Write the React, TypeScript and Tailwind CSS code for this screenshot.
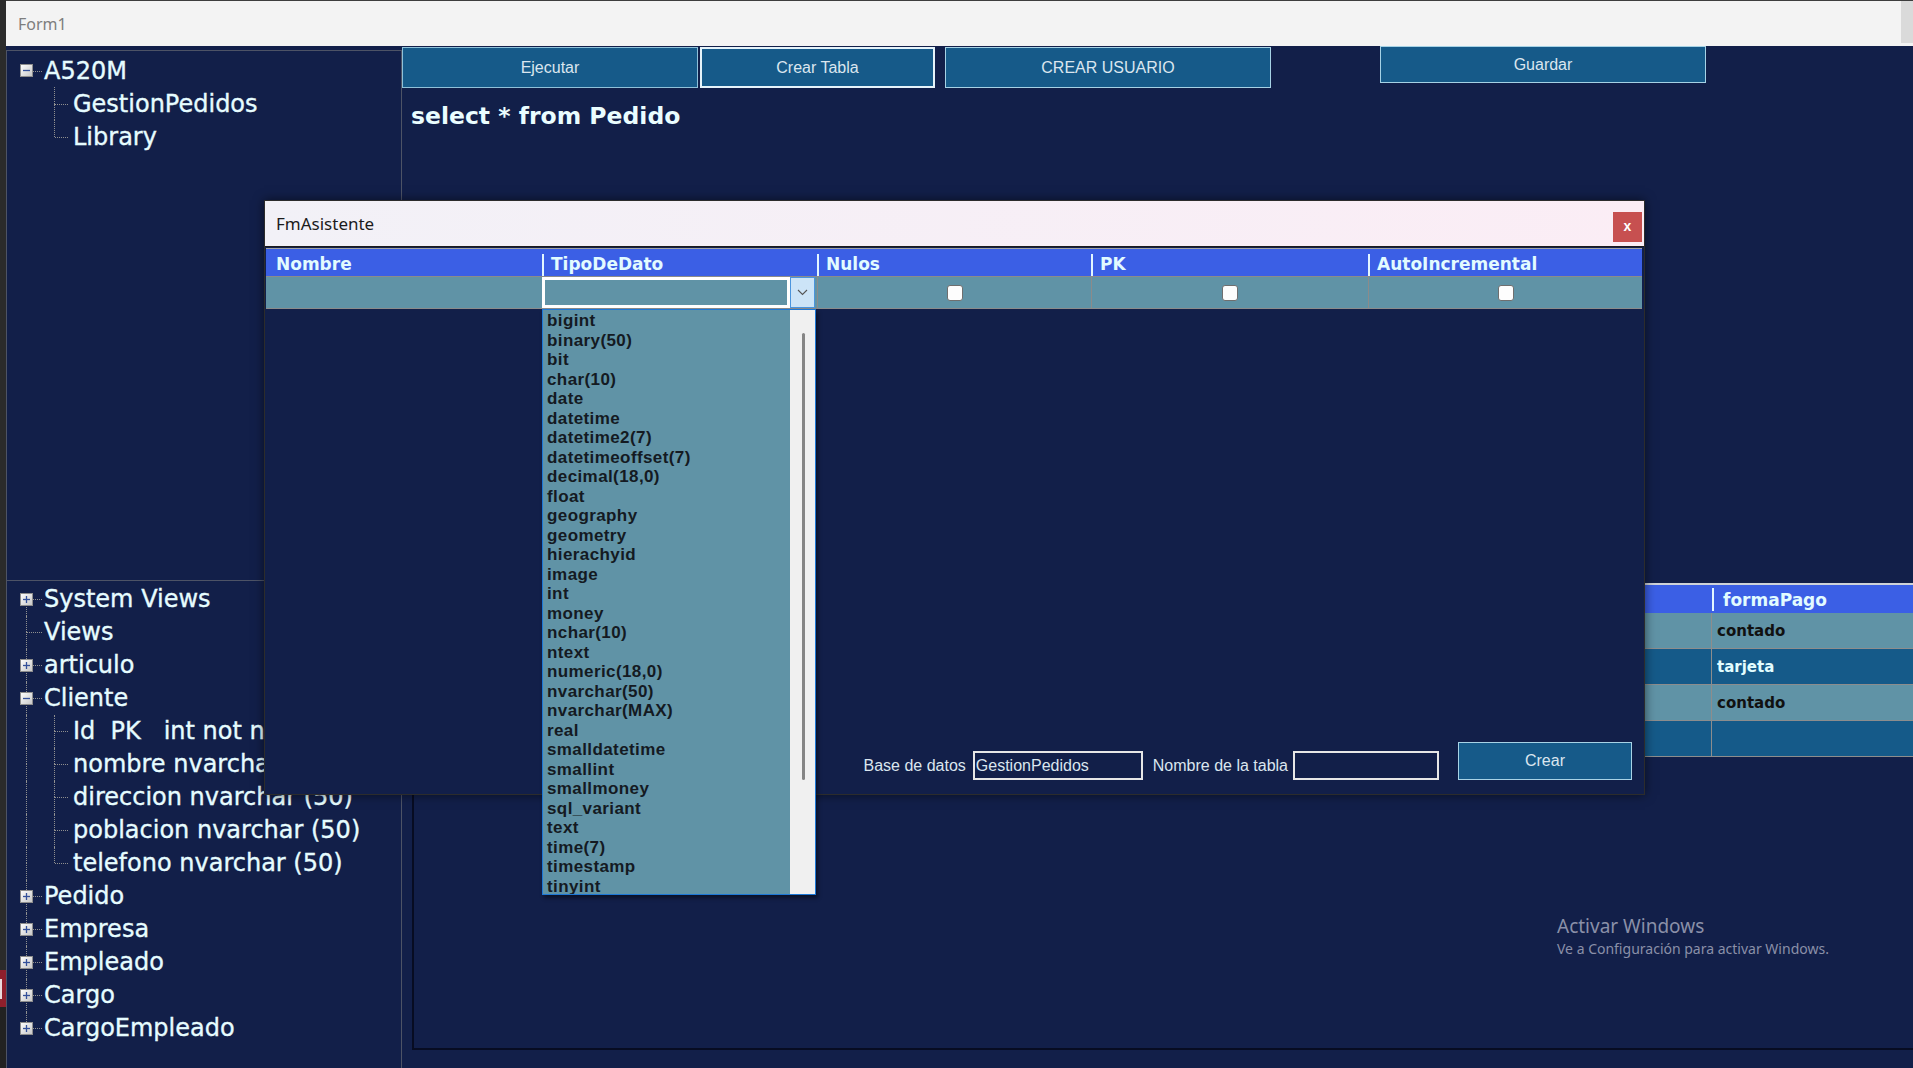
import React from "react";

const TYPES = [
  "bigint", "binary(50)", "bit", "char(10)", "date", "datetime", "datetime2(7)", "datetimeoffset(7)",
  "decimal(18,0)", "float", "geography", "geometry", "hierachyid", "image", "int", "money", "nchar(10)",
  "ntext", "numeric(18,0)", "nvarchar(50)", "nvarchar(MAX)", "real", "smalldatetime", "smallint",
  "smallmoney", "sql_variant", "text", "time(7)", "timestamp", "tinyint",
];

const COLUMNS = ["Nombre", "TipoDeDato", "Nulos", "PK", "AutoIncremental"];

const RESULTS = [
  { value: "contado", light: true },
  { value: "tarjeta", light: false },
  { value: "contado", light: true },
  { value: "", light: false },
];

interface RowProps {
  label: string
  depth: 0 | 1
  box?: "open" | "closed"
  up?: boolean
  down?: boolean
  childDown?: boolean
}

const Expander = ({ open }: { open: boolean }) => (
  <svg width="13" height="13" viewBox="0 0 13 13">
    <defs>
      <linearGradient id="exp-bg" x1="0" y1="0" x2="1" y2="1">
        <stop offset="0" stopColor="#ffffff" />
        <stop offset="1" stopColor="#c6c6c6" />
      </linearGradient>
    </defs>
    <rect x="0.5" y="0.5" width="12" height="12" fill="url(#exp-bg)" stroke="#8d8d8d" />
    <path d="M3 6.5h7" stroke="#34509a" strokeWidth="1.3" />
    {!open && <path d="M6.5 3v7" stroke="#34509a" strokeWidth="1.3" />}
  </svg>
);

const TreeRow = ({ label, depth, box, up, down, childDown }: RowProps) => (
  <div className="relative flex h-[33px] items-center whitespace-pre">
    {up && <span className="absolute left-[19px] top-0 h-1/2 border-l border-dotted border-[#8f8f8f]" />}
    {down && <span className="absolute left-[19px] top-1/2 h-1/2 border-l border-dotted border-[#8f8f8f]" />}
    {depth === 0 && <span className="absolute left-[20px] top-1/2 w-[15px] border-t border-dotted border-[#8f8f8f]" />}
    {depth === 1 && (
      <>
        <span className="absolute left-[47px] top-0 h-1/2 border-l border-dotted border-[#8f8f8f]" />
        {childDown && <span className="absolute left-[47px] top-1/2 h-1/2 border-l border-dotted border-[#8f8f8f]" />}
        <span className="absolute left-[48px] top-1/2 w-[13px] border-t border-dotted border-[#8f8f8f]" />
      </>
    )}
    {box && (
      <span className="absolute left-[13px] top-[10px] flex">
        <Expander open={box === "open"} />
      </span>
    )}
    <span className={depth === 0 ? "pl-[37px]" : "pl-[66px]"}>{label}</span>
  </div>
);

const WinButton = ({ label, className }: { label: string; className: string }) => (
  <div className={`flex items-center justify-center bg-[#165a89] text-[16px] text-[#dbe6ef] font-['Liberation_Sans',Arial,sans-serif] ${className}`}>
    {label}
  </div>
);

const Modal = () => (
  <div className="absolute left-[264px] top-[200px] flex h-[595px] w-[1381px] flex-col border border-[#2c2c2c] bg-[#121f49] shadow-[0_0_10px_rgba(0,0,0,0.55)]">
    <div className="flex h-[46px] shrink-0 items-center justify-between border-b border-[#1b1b1b] bg-gradient-to-r from-[#f2f1f7] to-[#fbedf5] pl-[11px] pr-[2px]">
      <span className="text-[17px] text-[#1b1b1b] font-['Noto_Sans',sans-serif]">FmAsistente</span>
      <div className="mt-[11px] flex h-[30px] w-[29px] items-center justify-center self-start bg-[#c75050] pb-[2px] text-[14px] font-bold text-white font-['Liberation_Sans',Arial,sans-serif]">
        x
      </div>
    </div>

    <div className="ml-[1px] mt-[1px] w-[1376px] border-t border-[#a3a3a3] font-['DejaVu_Sans',Verdana,sans-serif] font-bold">
      <div className="grid h-[27px] grid-cols-[276px_275px_274px_277px_274px] bg-[#3b5fe5] pt-[3px] text-[17px] text-[#e2fbff]">
        {COLUMNS.map((c, i) => (
          <div key={c} className="relative flex items-center pl-[9px]">
            {i > 0 && <span className="absolute left-0 top-[2px] bottom-[2px] w-[2px] bg-[#e2f6ff]" />}
            <span className={i === 0 ? "pl-[1px]" : ""}>{c}</span>
          </div>
        ))}
      </div>
      <div className="grid h-[33px] grid-cols-[276px_275px_274px_277px_274px] border-y border-[#8b8b8b] bg-[#6093a6]">
        <div />
        <div className="flex items-center pr-[2px]">
          <div className="flex h-[31px] w-full">
            <div className="flex-1 border-[3px] border-white bg-[#6093a6]" />
            <div className="flex w-[25px] items-center justify-center border border-[#4b95dd] bg-[#cce4f7]">
              <svg width="11" height="7" viewBox="0 0 11 7">
                <path d="M1 1l4.5 4.5L10 1" fill="none" stroke="#555" strokeWidth="1.1" />
              </svg>
            </div>
          </div>
        </div>
        {[0, 1, 2].map((i) => (
          <div key={i} className="flex items-center justify-center border-l border-[#8b8b8b]">
            <span className="h-[16px] w-[16px] rounded-[3px] border border-[#6f6f6f] bg-[#fdfdfd]" />
          </div>
        ))}
      </div>
    </div>

    <div className="mt-auto flex items-end justify-end pb-[14px] pr-[12px] text-[16px] text-[#dbe6ef] font-['Liberation_Sans',Arial,sans-serif]">
      <span className="flex h-[29px] items-center">Base de datos</span>
      <div className="ml-[7px] flex h-[29px] w-[170px] items-center border-2 border-[#e6e6e6] pl-[1px]">GestionPedidos</div>
      <span className="ml-[10px] flex h-[29px] items-center">Nombre de la tabla</span>
      <div className="ml-[5px] h-[29px] w-[146px] border-2 border-[#e6e6e6]" />
      <WinButton label="Crear" className="ml-[19px] h-[38px] w-[174px] border border-[#a8d3e6]" />
    </div>

    <div className="absolute left-[277px] top-[108px] flex h-[586px] w-[274px] border border-[#1d78d6] shadow-[2px_3px_4px_rgba(0,0,0,0.45)]">
      <div className="flex-1 overflow-hidden bg-[#6093a6] pl-[4px] pt-[1px] text-[17px] font-bold tracking-[0.4px] text-[#141a22] font-['Liberation_Sans',Arial,sans-serif]">
        {TYPES.map((t) => (
          <div key={t} className="h-[19.5px] whitespace-nowrap leading-[19.5px]">{t}</div>
        ))}
      </div>
      <div className="w-[25px] bg-[#f0f0f0] pl-[12px] pt-[23px]">
        <div className="h-[447px] w-[3px] rounded-full bg-[#858585]" />
      </div>
    </div>
  </div>
);

export default function App() {
  return (
    <div className="relative flex h-[1068px] w-[1913px] overflow-hidden bg-[#2b2b2b]">
      <div className="flex w-[6px] shrink-0 flex-col">
        <div className="h-[970px] bg-[#2b2b2b]" />
        <div className="flex h-[37px] items-center bg-[#8f1f2c]">
          <span className="h-[20px] w-[2px] bg-[#e9dadc]" />
        </div>
        <div className="flex-1 bg-[#222]" />
      </div>

      <div className="flex flex-1 flex-col">
        <div className="flex h-[46px] shrink-0 items-start justify-between border-t border-[#3d3d3d] bg-[#f3f3f3]">
          <span className="self-center pl-[12px] text-[16px] text-[#7e7e7e] font-['Noto_Sans',sans-serif]">Form1</span>
          <div className="h-[42px] w-[12px] bg-[#dadada]" />
        </div>

        <div className="flex flex-1 bg-[#121f49]">
          <div className="flex w-[396px] shrink-0 flex-col pt-[4px] text-[24px] text-[#e6fcff] [-webkit-text-stroke:0.35px_#e6fcff] font-['DejaVu_Sans',Verdana,sans-serif]">
            <div className="h-[530px] overflow-hidden border-x border-t border-[#4d5366] pt-[3px]">
              <TreeRow label="A520M" depth={0} box="open" />
              <TreeRow label="GestionPedidos" depth={1} childDown />
              <TreeRow label="Library" depth={1} />
            </div>
            <div className="flex-1 overflow-hidden border-x border-t border-[#4d5366] pt-[1.5px]">
              <TreeRow label="System Views" depth={0} box="closed" down />
              <TreeRow label="Views" depth={0} up down />
              <TreeRow label="articulo" depth={0} box="closed" up down />
              <TreeRow label="Cliente" depth={0} box="open" up down />
              <TreeRow label="Id  PK   int not null" depth={1} up down childDown />
              <TreeRow label="nombre nvarchar (50)" depth={1} up down childDown />
              <TreeRow label="direccion nvarchar (50)" depth={1} up down childDown />
              <TreeRow label="poblacion nvarchar (50)" depth={1} up down childDown />
              <TreeRow label="telefono nvarchar (50)" depth={1} up down />
              <TreeRow label="Pedido" depth={0} box="closed" up down />
              <TreeRow label="Empresa" depth={0} box="closed" up down />
              <TreeRow label="Empleado" depth={0} box="closed" up down />
              <TreeRow label="Cargo" depth={0} box="closed" up down />
              <TreeRow label="CargoEmpleado" depth={0} box="closed" up />
            </div>
          </div>

          <div className="flex flex-1 flex-col">
            <div className="mt-px flex items-start">
              <WinButton label="Ejecutar" className="h-[41px] w-[296px] border border-[#8fc1d9]" />
              <WinButton label="Crear Tabla" className="ml-[2px] h-[41px] w-[235px] border-2 border-[#e5f3fa]" />
              <WinButton label="CREAR USUARIO" className="ml-[10px] h-[41px] w-[326px] border border-[#a6d2e5]" />
              <WinButton label="Guardar" className="ml-[109px] -mt-px h-[37px] w-[326px] border border-[#a6d2e5]" />
            </div>
            <div className="mt-[14px] h-[28px] pl-[9px] text-[23.5px] font-bold leading-[28px] text-[#eafdff] font-['DejaVu_Sans',Verdana,sans-serif]">
              select * from Pedido
            </div>
            <div className="ml-[10px] mt-[453px] h-[467px] border-b-2 border-l-2 border-[#070c22]">
              <div className="border-t-2 border-[#cfd3d8] text-[15px] font-bold font-['DejaVu_Sans',Verdana,sans-serif]">
                <div className="flex h-[28px] bg-[#3b5fe5] pt-[3px] text-[17px] text-[#e2fbff]">
                  <div className="flex-1" />
                  <div className="relative flex w-[201px] items-center pl-[11px]">
                    <span className="absolute left-0 top-0 bottom-[2px] w-[2px] bg-[#e2f6ff]" />
                    formaPago
                  </div>
                </div>
                {RESULTS.map((r, i) => (
                  <div
                    key={i}
                    className={`flex h-[36px] border-b border-[#8d8d8d] ${r.light ? "bg-[#6093a6] text-[#111]" : "bg-[#155a89] text-[#e2fdff]"}`}
                  >
                    <div className="flex-1 border-r border-[#8d8d8d]" />
                    <div className="flex w-[201px] items-center pl-[5px] pt-[2px]">{r.value}</div>
                  </div>
                ))}
              </div>
            </div>
          </div>
        </div>
      </div>

      <Modal />

      <div className="absolute left-[1557px] top-[913px] text-[#8a90a8] font-['Noto_Sans',sans-serif]">
        <div className="text-[19px] leading-[26px]">Activar Windows</div>
        <div className="text-[14px] leading-[20px]">Ve a Configuración para activar Windows.</div>
      </div>
    </div>
  );
}
